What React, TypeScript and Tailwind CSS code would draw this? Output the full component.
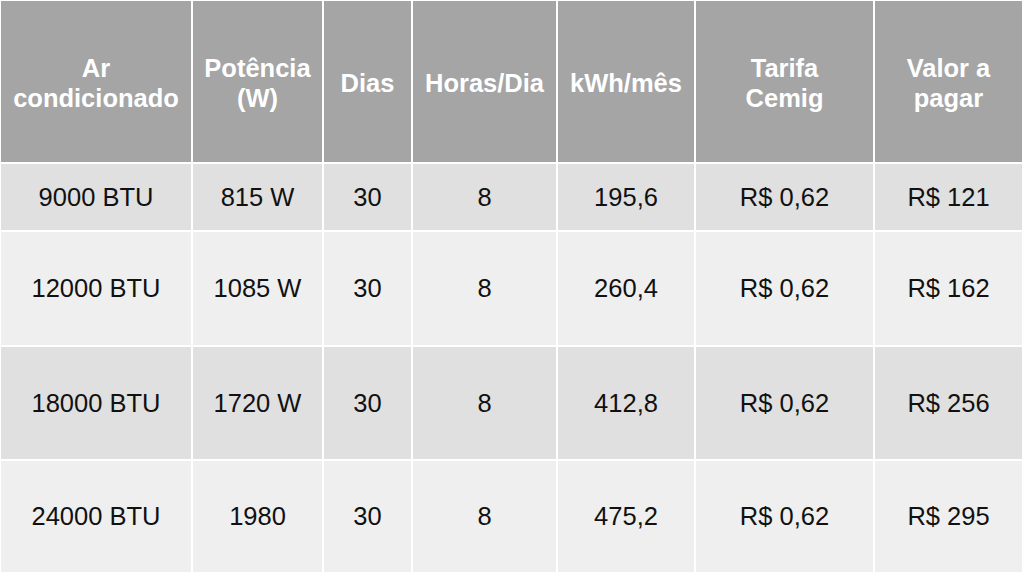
import React from 'react'

const HEADERS = [
  ['Ar', 'condicionado'],
  ['Potência', '(W)'],
  ['Dias'],
  ['Horas/Dia'],
  ['kWh/mês'],
  ['Tarifa', 'Cemig'],
  ['Valor a', 'pagar'],
]

const ROWS = [
  { bg: 'bg-[#e0e0e0]', cells: ['9000 BTU', '815 W', '30', '8', '195,6', 'R$ 0,62', 'R$ 121'] },
  { bg: 'bg-[#efefef]', cells: ['12000 BTU', '1085 W', '30', '8', '260,4', 'R$ 0,62', 'R$ 162'] },
  { bg: 'bg-[#e0e0e0]', cells: ['18000 BTU', '1720 W', '30', '8', '412,8', 'R$ 0,62', 'R$ 256'] },
  { bg: 'bg-[#efefef]', cells: ['24000 BTU', '1980', '30', '8', '475,2', 'R$ 0,62', 'R$ 295'] },
]

export default function App() {
  return (
    <div
      className="w-[1024px] h-[576px] bg-white pl-[1px] pr-[2px] pt-[1px] pb-[3px] overflow-hidden"
      style={{ fontFamily: '"Liberation Sans", Arial, sans-serif' }}
    >
      <div className="grid h-full gap-[2px] grid-cols-[190px_129px_87px_143px_136px_177px_147px] grid-rows-[161px_66px_113px_112px_111px]">
        {HEADERS.map((lines, i) => (
          <div key={i} className="bg-[#a5a5a5] flex flex-col items-center justify-center text-white font-bold text-[25.5px] leading-[30px] text-center pt-[3px]">
            {lines.map(l => <span key={l}>{l}</span>)}
          </div>
        ))}
        {ROWS.map((row, r) =>
          row.cells.map((c, i) => (
            <div key={`${r}-${i}`} className={`${row.bg} flex items-center justify-center text-[25.5px] text-[#111]`}>
              {c}
            </div>
          ))
        )}
      </div>
    </div>
  )
}
